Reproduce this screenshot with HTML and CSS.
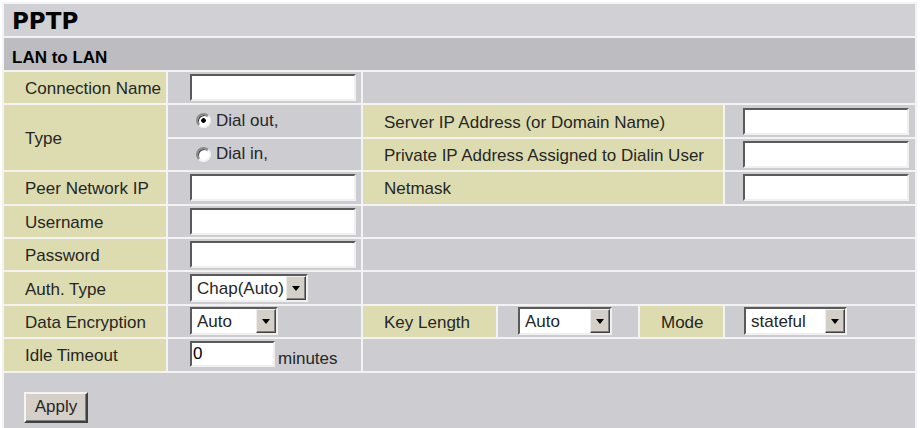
FILE: index.html
```html
<!DOCTYPE html>
<html lang="en">
<head>
    <meta charset="UTF-8">
    <meta name="viewport" content="width=device-width, initial-scale=1.0">
    <title>PPTP</title>
<link rel="stylesheet" href="styles.css">
</head>

<body>

<form class="pptp" onsubmit="return false">
<table class="grid">
    <colgroup>
        <col class="c1"><col class="c2"><col class="c3"><col class="c4"><col class="c5"><col class="c6">
    </colgroup>

    <!-- headings -->
    <tr><td colspan="6" class="title">PPTP</td></tr>
    <tr><td colspan="6" class="section">LAN to LAN</td></tr>

    <tr>
        <td class="label">Connection Name</td>
        <td class="value"><input type="text" class="field"></td>
        <td colspan="4"></td>
    </tr>

    <!-- type: dial out / dial in -->
    <tr>
        <td class="label" rowspan="2">Type</td>
        <td class="value choice"><label><input type="radio" name="type" checked>Dial out,</label></td>
        <td colspan="3" class="label">Server IP Address (or Domain Name)</td>
        <td class="value far"><input type="text" class="field"></td>
    </tr>
    <tr>
        <td class="value choice"><label><input type="radio" name="type">Dial in,</label></td>
        <td colspan="3" class="label">Private IP Address Assigned to Dialin User</td>
        <td class="value far"><input type="text" class="field"></td>
    </tr>

    <tr>
        <td class="label">Peer Network IP</td>
        <td class="value"><input type="text" class="field"></td>
        <td colspan="3" class="label">Netmask</td>
        <td class="value far"><input type="text" class="field"></td>
    </tr>
    <tr>
        <td class="label">Username</td>
        <td class="value"><input type="text" class="field"></td>
        <td colspan="4"></td>
    </tr>
    <tr>
        <td class="label">Password</td>
        <td class="value"><input type="password" class="field"></td>
        <td colspan="4"></td>
    </tr>
    <tr>
        <td class="label">Auth. Type</td>
        <td class="value">
            <span class="select auth"><select><option>Chap(Auto)</option><option>Chap</option><option>Pap</option></select><span class="arrow"></span></span>
        </td>
        <td colspan="4"></td>
    </tr>

    <!-- encryption -->
    <tr>
        <td class="label">Data Encryption</td>
        <td class="value">
            <span class="select enc"><select><option>Auto</option><option>None</option></select><span class="arrow"></span></span>
        </td>
        <td class="label">Key Length</td>
        <td class="value mid">
            <span class="select key"><select><option>Auto</option><option>40</option><option>128</option></select><span class="arrow"></span></span>
        </td>
        <td class="label">Mode</td>
        <td class="value near">
            <span class="select mode"><select><option>stateful</option><option>stateless</option></select><span class="arrow"></span></span>
        </td>
    </tr>

    <tr>
        <td class="label">Idle Timeout</td>
        <td class="value"><input type="text" class="field idle" value="0"><span class="unit">minutes</span></td>
        <td colspan="4"></td>
    </tr>

    <tr class="actions">
        <td colspan="6"><button type="submit" class="apply">Apply</button></td>
    </tr>
</table>
</form>

</body>
</html>
```

FILE: styles.css
```css
*{
    box-sizing: border-box;
}
body{
    margin: 2px;
    background: #fff;
    font-family: "Liberation Sans", Arial, sans-serif;
    font-size: 17px;
    color: #262626;
}
.grid{
    width: 915px;
    table-layout: fixed;
    border-collapse: separate;
    border-spacing: 2px;
    background: #f3f3f3;
}
.c1{ width: 162px; }
.c2{ width: 193px; }
.c3{ width: 133px; }
.c4{ width: 140px; }
.c5{ width: 83px; }
.c6{ width: 190px; }

td{
    height: 31.4px;
    padding: 0;
    background: #cdcdd1;
    vertical-align: middle;
    white-space: nowrap;
}
.title{
    height: 32px;
    padding: 2px 0 0 8px;
    background: #d1d1d5;
    font-family: "DejaVu Sans", sans-serif;
    font-weight: bold;
    font-size: 23px;
    color: #000;
}
.section{
    height: 32px;
    padding: 7px 0 0 8px;
    background: #bdbdc1;
    font-weight: bold;
    color: #000;
}
.label{
    padding: 3px 0 0 21px;
    background: #dcdcb0;
}

/* value cells */
.value{ padding-left: 22px; }
.mid{ padding-left: 20px; }
.near{ padding-left: 19px; }
.far{ padding-left: 18px; }
.choice{ padding: 2px 0 0 28px; }

.field{
    width: 166px;
    height: 27px;
    margin: 0;
    padding: 0 3px;
    border: 2px solid;
    border-color: #5a5a5a #f0f0f0 #f0f0f0 #5a5a5a;
    background: #fff;
    font: inherit;
    vertical-align: middle;
}
.idle{
    width: 85px;
    height: 26px;
    padding: 0 1px;
}
.unit{
    margin-left: 3px;
    vertical-align: -6px;
}

.choice label{
    display: inline-flex;
    align-items: center;
}
input[type=radio]{
    appearance: none;
    width: 15px;
    height: 15px;
    margin: 0 5px 0 0;
    border: 2px solid;
    border-color: #8a8a8a #f4f4f4 #f4f4f4 #8a8a8a;
    border-radius: 50%;
    background: #fff;
    box-shadow: inset 1px 1px 0 #404040;
}
input[type=radio]:checked{
    background: radial-gradient(circle, #000 0 2px, #fff 2.6px);
}

/* fake classic dropdown */
.select{
    display: inline-flex;
    height: 28px;
    border: 2px solid;
    border-color: #5a5a5a #f0f0f0 #f0f0f0 #5a5a5a;
    background: #fff;
    vertical-align: middle;
}
.select select{
    flex: 1;
    min-width: 0;
    appearance: none;
    border: none;
    outline: none;
    background: #fff;
    padding: 0 0 0 5px;
    font: inherit;
    color: #262626;
}
.arrow{
    flex: none;
    width: 20px;
    display: flex;
    align-items: center;
    justify-content: center;
    background: #d4d0c8;
    border: 1px solid;
    border-color: #eeeeee #404040 #404040 #eeeeee;
    box-shadow: inset -1px -1px 0 #808080;
}
.arrow::after{
    content: "";
    border-left: 4px solid transparent;
    border-right: 4px solid transparent;
    border-top: 5px solid #000;
    margin-top: 1px;
}
.auth{ width: 118px; }
.enc{ width: 88px; }
.key{ width: 94px; }
.mode{ width: 103px; }

.actions td{
    height: 58px;
    vertical-align: top;
    padding: 19px 0 0 20px;
}
.apply{
    width: 64px;
    height: 31px;
    padding: 0;
    border: 2px solid;
    border-color: #f4f4f4 #404040 #404040 #f4f4f4;
    box-shadow: inset -1px -1px 0 #808080;
    background: #d4d0c8;
    font: inherit;
    color: #262626;
}
```
